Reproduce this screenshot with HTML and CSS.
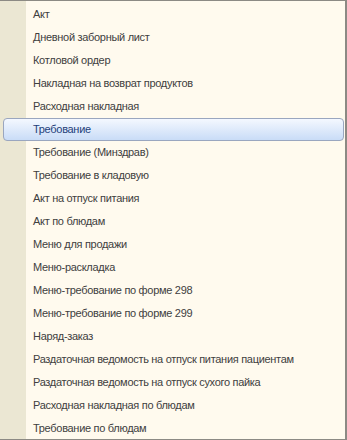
FILE: index.html
```html
<!DOCTYPE html>
<html lang="ru">
<head>
    <meta charset="UTF-8">
    <title>Список документов</title>
    <link rel="stylesheet" href="styles.css">
</head>
<body>
    <div class="list">
        <div class="gutter"></div>
        <ul class="items">
            <li class="item">Акт</li>
            <li class="item">Дневной заборный лист</li>
            <li class="item">Котловой ордер</li>
            <li class="item">Накладная на возврат продуктов</li>
            <li class="item">Расходная накладная</li>
            <li class="item selected">Требование</li>
            <li class="item">Требование (Минздрав)</li>
            <li class="item">Требование в кладовую</li>
            <li class="item">Акт на отпуск питания</li>
            <li class="item">Акт по блюдам</li>
            <li class="item">Меню для продажи</li>
            <li class="item">Меню-раскладка</li>
            <li class="item">Меню-требование по форме 298</li>
            <li class="item">Меню-требование по форме 299</li>
            <li class="item">Наряд-заказ</li>
            <li class="item">Раздаточная ведомость на отпуск питания пациентам</li>
            <li class="item">Раздаточная ведомость на отпуск сухого пайка</li>
            <li class="item">Расходная накладная по блюдам</li>
            <li class="item">Требование по блюдам</li>
        </ul>
    </div>
</body>
</html>
```

FILE: styles.css
```css
body {
    margin: 0;
    font-family: 'Liberation Sans', Arial, sans-serif;
    font-size: 11px;
    letter-spacing: -0.3px;
    color: #404040;
}
.list {
    display: flex;
    box-sizing: border-box;
    width: 347px;
    height: 440px;
    border-top: 1px solid #8c8a84;
    border-right: 2px solid #8c8a84;
    border-bottom: 1px solid #8c8a84;
    background: #fffaee;
}
.gutter {
    width: 26px;
    background: #ebe7d3;
    flex-shrink: 0;
}
.items {
    list-style: none;
    margin: 0;
    padding: 2px 0 0 0;
    flex: 1;
}
.item {
    height: 23px;
    line-height: 23px;
    padding-left: 7px;
    white-space: nowrap;
}
.selected {
    margin-left: -23px;
    margin-right: 1px;
    padding-left: 29px;
    height: 21px;
    line-height: 21px;
    border: 1px solid #9aa6bf;
    border-radius: 4px;
    background: linear-gradient(#f4f8ff, #c9dcf7);
    color: #1f3f7a;
}
```
